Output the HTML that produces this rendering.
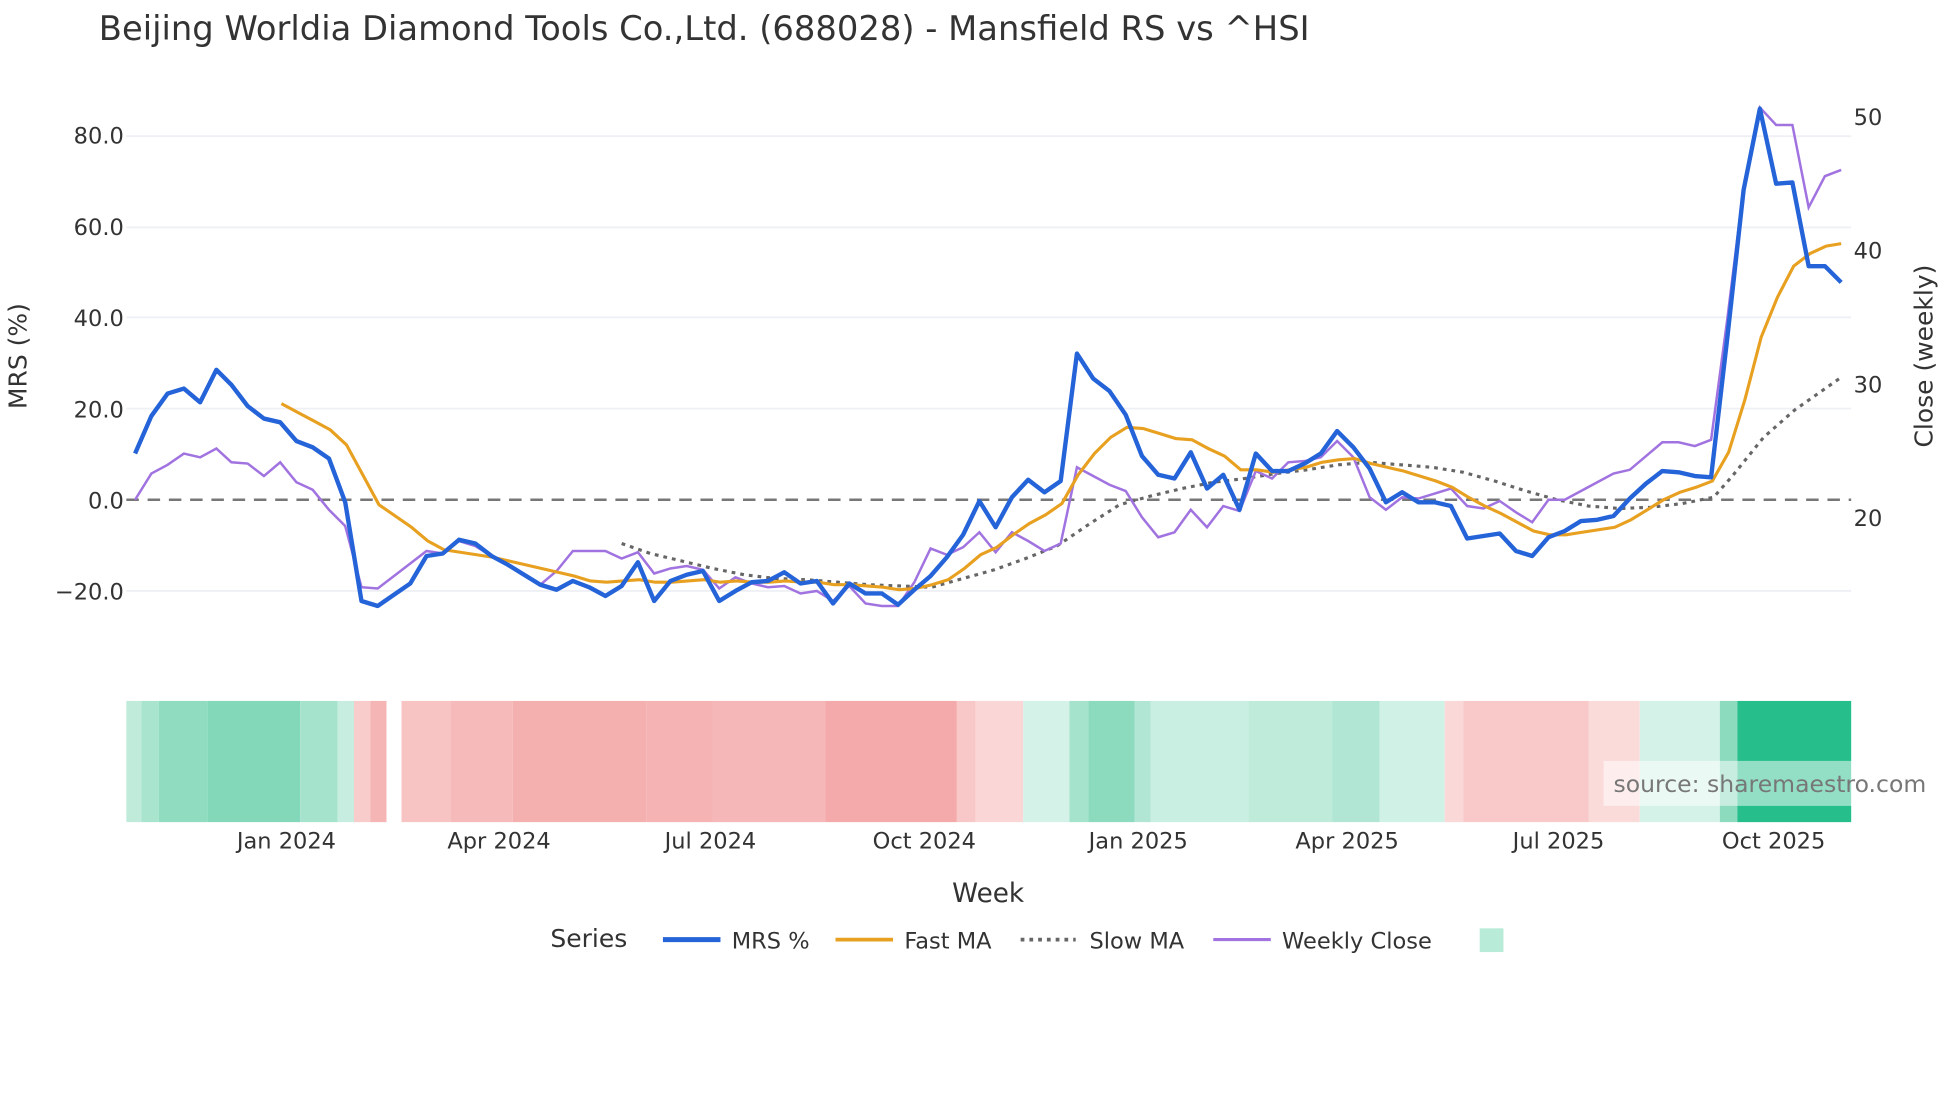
<!DOCTYPE html>
<html><head><meta charset="utf-8"><style>html,body{margin:0;padding:0;background:#fff;}svg{display:block;}text{font-family:"DejaVu Sans","Liberation Sans",sans-serif;fill:#2a3f5f;}</style></head>
<body>
<svg width="1960" height="1102" viewBox="0 0 1567 882" preserveAspectRatio="none" xmlns="http://www.w3.org/2000/svg">
<rect width="1567" height="882" fill="#fff"/>
<text x="79" y="32" font-size="27" style="fill:#333">Beijing Worldia Diamond Tools Co.,Ltd. (688028) - Mansfield RS vs ^HSI</text>
<g stroke="#eef0f5" stroke-width="1.5">
<line x1="101" x2="1480" y1="109" y2="109"/><line x1="101" x2="1480" y1="182" y2="182"/><line x1="101" x2="1480" y1="254" y2="254"/><line x1="101" x2="1480" y1="327" y2="327"/><line x1="101" x2="1480" y1="473" y2="473"/>
</g>
<g font-size="18" text-anchor="end" style="fill:#333">
<text x="99" y="115" style="fill:#333">80.0</text><text x="99" y="188" style="fill:#333">60.0</text><text x="99" y="261" style="fill:#333">40.0</text><text x="99" y="334" style="fill:#333">20.0</text><text x="99" y="407" style="fill:#333">0.0</text><text x="99" y="480" style="fill:#333">−20.0</text>
</g>
<g font-size="18" style="fill:#333">
<text x="1482" y="100" style="fill:#333">50</text><text x="1482" y="207" style="fill:#333">40</text><text x="1482" y="314" style="fill:#333">30</text><text x="1482" y="421" style="fill:#333">20</text>
</g>
<text transform="translate(21,285) rotate(-90)" text-anchor="middle" font-size="20" style="fill:#333">MRS (%)</text>
<text transform="translate(1545,285) rotate(-90)" text-anchor="middle" font-size="20" style="fill:#333">Close (weekly)</text>
<line x1="101" x2="1480" y1="400" y2="400" stroke="#777" stroke-width="2" stroke-dasharray="10,7"/>
<polyline fill="none" stroke="#666" stroke-width="2.5" stroke-dasharray="3,4" points="497,435 520,443 545,449 570,455 595,460 620,463 645,464 670,466 695,468 720,469 745,470 770,463 795,456 820,447 845,437 870,420 895,404 920,397 945,391 970,386 995,383 1020,379 1045,376 1070,372 1095,370 1120,372 1145,374 1170,378 1195,385 1220,393 1245,400 1270,405 1295,407 1320,406 1345,403 1370,398 1385,381 1410,350 1435,328 1472,302"/>
<polyline fill="none" stroke="#a173e0" stroke-width="2" points="108,400 121,379 134,372 147,363 160,366 173,359 185,370 198,371 211,381 224,370 237,386 250,392 263,408 276,421 289,470 302,471 315,461 328,451 341,441 354,443 367,433 380,437 393,445 406,452 419,460 432,468 445,457 458,441 471,441 484,441 497,447 510,442 523,459 536,455 549,453 562,456 575,471 588,462 601,467 614,470 627,469 640,475 653,473 666,481 679,469 692,483 705,485 718,485 731,466 744,439 757,444 770,438 783,426 796,442 809,426 822,433 835,441 848,435 861,374 874,381 887,388 900,393 913,414 926,430 939,426 952,408 965,422 978,405 991,409 1004,377 1017,383 1030,370 1043,369 1056,366 1069,353 1082,366 1095,398 1108,408 1121,398 1134,399 1147,395 1160,391 1173,405 1186,407 1199,401 1212,410 1225,418 1238,400 1251,400 1264,393 1277,386 1290,379 1303,376 1316,365 1329,354 1342,354 1355,357 1368,352 1381,255 1394,150 1407,86 1420,100 1433,100 1446,166 1459,141 1472,136"/>
<polyline fill="none" stroke="#e8a020" stroke-width="2.5" points="225,323 238,330 251,337 264,344 277,356 290,380 303,404 316,413 329,422 342,433 355,440 368,442 381,444 394,446 407,449 420,452 433,455 446,458 459,461 472,465 485,466 498,465 511,464 524,466 537,466 550,465 563,464 576,466 589,465 602,466 615,466 628,465 641,466 654,466 667,468 680,468 693,469 706,470 719,472 732,471 745,468 758,464 771,455 784,444 797,438 810,428 823,419 836,412 849,403 862,380 875,363 888,350 901,342 914,343 927,347 940,351 953,352 966,359 979,365 992,376 1005,376 1018,378 1031,376 1044,374 1057,370 1070,368 1083,367 1096,371 1109,374 1122,377 1135,381 1148,385 1161,390 1174,398 1187,405 1200,411 1213,418 1226,425 1239,428 1252,428 1265,426 1278,424 1291,422 1304,416 1317,408 1330,400 1343,394 1356,390 1369,385 1382,362 1395,320 1408,270 1421,238 1434,213 1447,203 1460,197 1472,195"/>
<polyline fill="none" stroke="#2563d9" stroke-width="3.5" stroke-linejoin="round" points="108,363 121,333 134,315 147,311 160,322 173,296 185,308 198,325 211,335 224,338 237,353 250,358 263,367 276,402 289,481 302,485 315,476 328,467 341,445 354,443 367,432 380,435 393,445 406,452 419,460 432,468 445,472 458,465 471,470 484,477 497,469 510,450 523,481 536,465 549,460 562,457 575,481 588,473 601,466 614,465 627,458 640,467 653,465 666,483 679,467 692,475 705,475 718,484 731,472 744,461 757,446 770,428 783,401 796,422 809,398 822,384 835,394 848,385 861,283 874,303 887,313 900,332 913,365 926,380 939,383 952,362 965,391 978,380 991,408 1004,363 1017,377 1030,377 1043,371 1056,363 1069,345 1082,358 1095,375 1108,402 1121,394 1134,402 1147,402 1160,405 1173,431 1186,429 1199,427 1212,441 1225,445 1238,430 1251,425 1264,417 1277,416 1290,413 1303,399 1316,387 1329,377 1342,378 1355,381 1368,382 1381,270 1394,152 1407,87 1420,147 1433,146 1446,213 1459,213 1472,226"/>
<g>
<rect x="101" y="561" width="12" height="97" fill="#c0ebdb"/>
<rect x="113" y="561" width="14" height="97" fill="#a9e4cf"/>
<rect x="127" y="561" width="39" height="97" fill="#8fdcc0"/>
<rect x="166" y="561" width="74" height="97" fill="#82d8b9"/>
<rect x="240" y="561" width="30" height="97" fill="#a5e3cd"/>
<rect x="270" y="561" width="13" height="97" fill="#c6eddf"/>
<rect x="283" y="561" width="13" height="97" fill="#f9cccc"/>
<rect x="296" y="561" width="13" height="97" fill="#f5b5b5"/>
<rect x="321" y="561" width="39" height="97" fill="#f7c3c3"/>
<rect x="360" y="561" width="50" height="97" fill="#f6baba"/>
<rect x="410" y="561" width="107" height="97" fill="#f4afaf"/>
<rect x="517" y="561" width="53" height="97" fill="#f5b3b3"/>
<rect x="570" y="561" width="90" height="97" fill="#f5b7b7"/>
<rect x="660" y="561" width="105" height="97" fill="#f4aaaa"/>
<rect x="765" y="561" width="15" height="97" fill="#f8c7c7"/>
<rect x="780" y="561" width="38" height="97" fill="#fad6d6"/>
<rect x="818" y="561" width="37" height="97" fill="#d5f2e8"/>
<rect x="855" y="561" width="15" height="97" fill="#a5e3cd"/>
<rect x="870" y="561" width="37" height="97" fill="#8cdbbf"/>
<rect x="907" y="561" width="13" height="97" fill="#b0e6d3"/>
<rect x="920" y="561" width="78" height="97" fill="#c8efe1"/>
<rect x="998" y="561" width="67" height="97" fill="#bfebdb"/>
<rect x="1065" y="561" width="38" height="97" fill="#b0e6d3"/>
<rect x="1103" y="561" width="52" height="97" fill="#d0f1e5"/>
<rect x="1155" y="561" width="15" height="97" fill="#fad8d8"/>
<rect x="1170" y="561" width="100" height="97" fill="#f9c8c8"/>
<rect x="1270" y="561" width="41" height="97" fill="#fbdada"/>
<rect x="1311" y="561" width="64" height="97" fill="#d5f2e8"/>
<rect x="1375" y="561" width="14" height="97" fill="#8cdbbf"/>
<rect x="1389" y="561" width="91" height="97" fill="#26bf8c"/>
</g>
<rect x="1282" y="609" width="285" height="36" fill="#fff" fill-opacity="0.5"/>
<text x="1290" y="634" font-size="18.8" style="fill:#777">source: sharemaestro.com</text>
<g font-size="18" text-anchor="middle" style="fill:#333">
<text x="229" y="679" style="fill:#333">Jan 2024</text><text x="399" y="679" style="fill:#333">Apr 2024</text><text x="568" y="679" style="fill:#333">Jul 2024</text><text x="739" y="679" style="fill:#333">Oct 2024</text><text x="910" y="679" style="fill:#333">Jan 2025</text><text x="1077" y="679" style="fill:#333">Apr 2025</text><text x="1246" y="679" style="fill:#333">Jul 2025</text><text x="1418" y="679" style="fill:#333">Oct 2025</text>
</g>
<text x="790" y="722" font-size="21" text-anchor="middle" style="fill:#333">Week</text>
<text x="440" y="758" font-size="20" style="fill:#333">Series</text>
<line x1="530" x2="576" y1="752" y2="752" stroke="#2563d9" stroke-width="4"/>
<text x="585" y="759" font-size="18" style="fill:#333">MRS %</text>
<line x1="668" x2="714" y1="752" y2="752" stroke="#e8a020" stroke-width="3"/>
<text x="723" y="759" font-size="18" style="fill:#333">Fast MA</text>
<line x1="816" x2="860" y1="752" y2="752" stroke="#666" stroke-width="3" stroke-dasharray="3,4"/>
<text x="871" y="759" font-size="18" style="fill:#333">Slow MA</text>
<line x1="970" x2="1016" y1="752" y2="752" stroke="#a173e0" stroke-width="2.5"/>
<text x="1025" y="759" font-size="18" style="fill:#333">Weekly Close</text>
<rect x="1183" y="743" width="19" height="19" fill="#b8ecd9"/>
</svg>
</body></html>
